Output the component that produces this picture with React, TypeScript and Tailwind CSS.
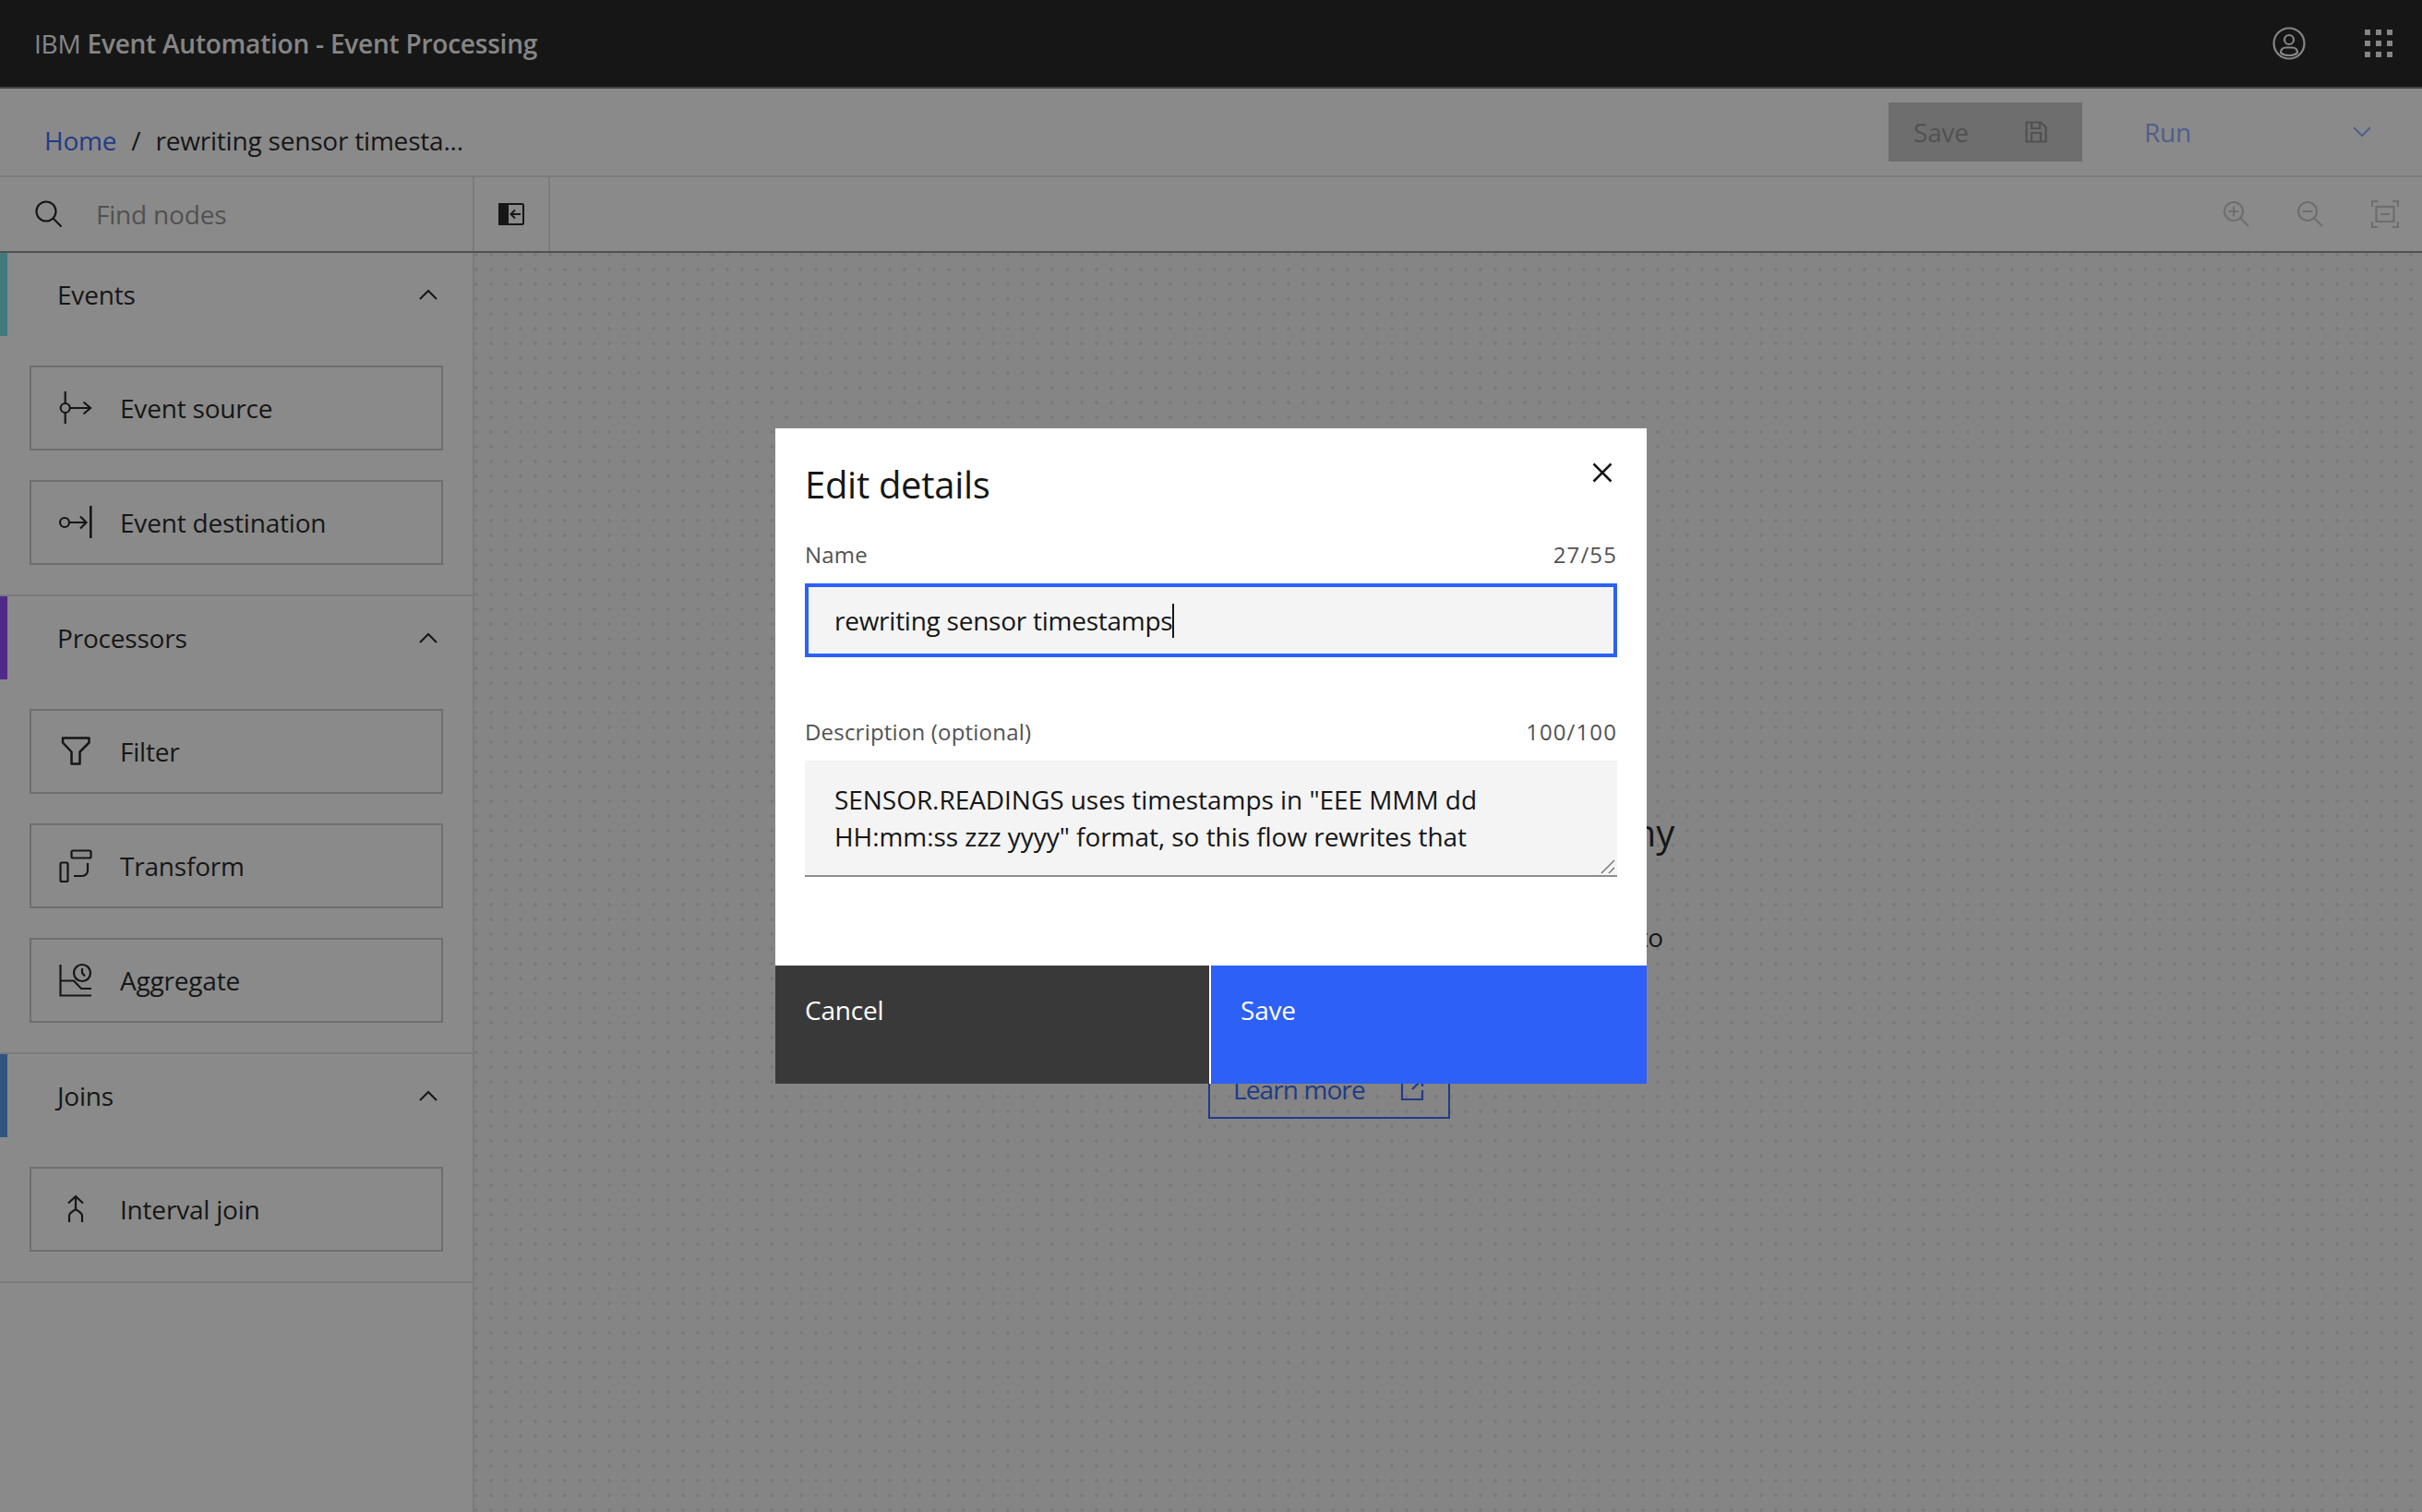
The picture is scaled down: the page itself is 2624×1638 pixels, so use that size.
import type { ReactNode } from "react";

function Svg({ size = 40, children, className = "" }: { size?: number; children: ReactNode; className?: string }) {
  return (
    <svg
      width={size}
      height={size}
      viewBox={`0 0 ${size} ${size}`}
      fill="none"
      stroke="currentColor"
      strokeWidth="2.2"
      className={`shrink-0 ${className}`}
    >
      {children}
    </svg>
  );
}

const nodeIcons: Record<string, ReactNode> = {
  source: (
    <>
      <path d="M8.7 2V15M8.7 25V37" />
      <circle cx="8.7" cy="20" r="5" />
      <path d="M13.7 20H36M28.5 13.5L36 20L28.5 26.5" />
    </>
  ),
  destination: (
    <>
      <circle cx="8" cy="20" r="5" />
      <path d="M13 20H31.5M25 13.5L31.5 20L25 26.5" />
      <path d="M36.3 2V37" strokeWidth="2.6" />
    </>
  ),
  filter: <path d="M6 5.5H34.5V10.5L24.5 20.5V33.5H15.5V20.5L6 10.5Z" strokeLinejoin="round" strokeWidth="2.5" />,
  transform: (
    <>
      <rect x="15.5" y="3.5" width="21" height="8" rx="1.5" />
      <rect x="3.5" y="16.5" width="8" height="20.5" rx="1.5" />
      <path d="M33 17V25A6 6 0 0 1 27 31H18" />
    </>
  ),
  aggregate: (
    <>
      <path d="M3.5 3V36.5H37" />
      <path d="M4 20.5H18L26 29H37" />
      <circle cx="27" cy="12" r="9" />
      <path d="M27 7V12L30 15.5" />
    </>
  ),
  join: <path d="M12 13.5L20 6L28 13.5M20 6V20M13 34V27C13 24 17 22.5 20 20C23 22.5 27 24 27 27V34" />,
};

function NodeCard({ icon, label }: { icon: string; label: string }) {
  return (
    <div className="flex h-[92px] items-center gap-[28px] border-2 border-[#c6c6c6] pl-[28px] text-[#161616]">
      <Svg>{nodeIcons[icon]}</Svg>
      <span>{label}</span>
    </div>
  );
}

function Section({ title, accent, children }: { title: string; accent: string; children: ReactNode }) {
  return (
    <div className="border-b-2 border-[#e0e0e0]">
      <div className={`flex h-[90px] items-center justify-between border-l-8 ${accent} pl-[54px] pr-[38px] text-[#161616]`}>
        <span>{title}</span>
        <svg width="20" height="12" viewBox="0 0 20 12" fill="none" stroke="currentColor" strokeWidth="2">
          <path d="M1 11L10 2L19 11" />
        </svg>
      </div>
      <div className="flex flex-col gap-8 px-8 py-8">{children}</div>
    </div>
  );
}

function Sidebar() {
  return (
    <aside className="w-[514px] shrink-0 border-r-2 border-[#e0e0e0] bg-white">
      <Section title="Events" accent="border-[#6fdfe0]">
        <NodeCard icon="source" label="Event source" />
        <NodeCard icon="destination" label="Event destination" />
      </Section>
      <Section title="Processors" accent="border-[#8a3ffc]">
        <NodeCard icon="filter" label="Filter" />
        <NodeCard icon="transform" label="Transform" />
        <NodeCard icon="aggregate" label="Aggregate" />
      </Section>
      <Section title="Joins" accent="border-[#4a94ec]">
        <NodeCard icon="join" label="Interval join" />
      </Section>
    </aside>
  );
}

function EditDialog() {
  return (
    <div className="flex h-[710px] w-[944px] flex-col bg-white text-[#161616]">
      <div className="flex flex-1 flex-col px-8 pt-[35px]">
        <div className="flex items-start justify-between">
          <h2 className="text-[40px] leading-[52px] tracking-[-0.3px]">Edit details</h2>
          <svg width="22" height="22" viewBox="0 0 22 22" fill="none" stroke="currentColor" strokeWidth="2.6" className="mr-[5px] mt-[2px]">
            <path d="M1.5 1.5L20.5 20.5M20.5 1.5L1.5 20.5" />
          </svg>
        </div>
        <div className="mt-[34px] flex h-8 items-center justify-between text-[24px] tracking-[0.2px] text-[#525252]">
          <label>Name</label>
          <span className="tracking-[1.1px]">27/55</span>
        </div>
        <div className="mt-[15px] flex h-20 items-center border-4 border-[#2c60f6] bg-[#f4f4f4] pl-[28px]">
          <span className="tracking-[-0.25px]">rewriting sensor timestamps</span>
          <span className="h-[37px] w-[2px] bg-[#161616]" />
        </div>
        <div className="mt-[65px] flex h-8 items-center justify-between text-[24px] tracking-[0.2px] text-[#525252]">
          <label>Description (optional)</label>
          <span className="tracking-[1.1px]">100/100</span>
        </div>
        <div className="relative mt-[15px] flex">
          <textarea
            readOnly
            className="h-[126px] w-full resize-none border-b-2 border-[#8d8d8d] bg-[#f4f4f4] px-[32px] pt-[22px] leading-[40px] tracking-[-0.05px] outline-none"
            value={'SENSOR.READINGS uses timestamps in "EEE MMM dd\nHH:mm:ss zzz yyyy" format, so this flow rewrites that'}
          />
          <svg width="16" height="16" viewBox="0 0 16 16" fill="none" stroke="#6f6f6f" strokeWidth="1.4" className="absolute bottom-[3px] right-[2px]">
            <path d="M1 15L15 1M9 15L15 9" />
          </svg>
        </div>
      </div>
      <div className="flex h-32 gap-[2px] text-white">
        <button className="w-[470px] bg-[#393939] pb-[32px] pl-8 text-left">Cancel</button>
        <button className="flex-1 bg-[#2c60f6] pb-[32px] pl-8 text-left">Save</button>
      </div>
    </div>
  );
}

export default function App() {
  return (
    <div className="relative flex h-screen flex-col overflow-hidden bg-white font-['Open_Sans',sans-serif] text-[28px] tracking-[-0.2px]">
      <header className="flex h-[96px] shrink-0 items-center justify-between border-b-2 border-[#6f6f6f] bg-[#161616] pl-[37px] pr-[32px] text-[#f4f4f4]">
        <div className="tracking-[-0.22px]">
          IBM <span className="font-semibold">Event Automation - Event Processing</span>
        </div>
        <div className="flex items-center gap-[64px]">
          <svg width="36" height="36" viewBox="0 0 36 36" fill="none" stroke="currentColor" strokeWidth="2.2">
            <circle cx="18" cy="18" r="16.5" />
            <circle cx="18" cy="14" r="5" />
            <path d="M9 28C9 24 12 22.5 15 22.5H21C24 22.5 27 24 27 28C24 32 12 32 9 28Z" />
          </svg>
          <div className="grid grid-cols-3 gap-[6px]">
            {Array.from({ length: 9 }).map((_, i) => (
              <span key={i} className="h-[6px] w-[6px] bg-[#f4f4f4]" />
            ))}
          </div>
        </div>
      </header>

      <div className="flex h-[96px] shrink-0 items-center justify-between border-b-2 border-[#e0e0e0] pl-[48px] pr-0">
        <div className="mt-[18px] flex items-center text-[#161616]">
          <span className="text-[#2c60f6]">Home</span>
          <span className="mx-[16px]">/</span>
          <span>rewriting sensor timesta...</span>
        </div>
        <div className="flex">
          <button className="flex h-16 w-[210px] items-center justify-between bg-[#c6c6c6] pl-[27px] pr-[38px] text-[#8d8d8d]">
            Save
            <svg width="24" height="24" viewBox="0 0 24 24" fill="none" stroke="currentColor" strokeWidth="2.2">
              <path d="M1.5 1.5H17L22.5 7V22.5H1.5Z" />
              <path d="M7 1.5V8H16V1.5M7 22.5V13H17V22.5" />
            </svg>
          </button>
          <button className="flex h-16 w-[368px] items-center justify-between pl-[67px] pr-[55px] text-[#88a8ff]">
            Run
            <svg width="20" height="12" viewBox="0 0 20 12" fill="none" stroke="currentColor" strokeWidth="2">
              <path d="M1 1L10 10L19 1" />
            </svg>
          </button>
        </div>
      </div>

      <div className="flex h-[82px] shrink-0 border-b-2 border-[#8d8d8d]">
        <div className="flex w-[514px] items-center gap-[36px] border-r-2 border-[#e0e0e0] pl-[38px]">
          <svg width="30" height="30" viewBox="0 0 30 30" fill="none" stroke="#161616" strokeWidth="2.2" className="shrink-0">
            <circle cx="12" cy="12" r="10.5" />
            <path d="M20 20L28.5 28.5" />
          </svg>
          <input placeholder="Find nodes" className="w-full bg-transparent outline-none placeholder:text-[#8d8d8d]" />
        </div>
        <div className="flex w-[82px] items-center justify-center border-r-2 border-[#e0e0e0]">
          <svg width="28" height="24" viewBox="0 0 28 24" fill="none" stroke="#161616" strokeWidth="2">
            <rect x="1" y="1" width="26" height="22" rx="1.5" />
            <rect x="1" y="1" width="9" height="22" fill="#161616" />
            <path d="M24 12H14M18 7.5L13.5 12L18 16.5" />
          </svg>
        </div>
        <div className="flex flex-1 items-center justify-end gap-[52px] pr-[25px] text-[#c6c6c6]">
          <svg width="28" height="28" viewBox="0 0 28 28" fill="none" stroke="currentColor" strokeWidth="2.2">
            <circle cx="11" cy="11" r="10" />
            <path d="M18 18L27 27M11 5.5V16.5M5.5 11H16.5" />
          </svg>
          <svg width="28" height="28" viewBox="0 0 28 28" fill="none" stroke="currentColor" strokeWidth="2.2">
            <circle cx="11" cy="11" r="10" />
            <path d="M18 18L27 27M5.5 11H16.5" />
          </svg>
          <svg width="30" height="30" viewBox="0 0 30 30" fill="none" stroke="currentColor" strokeWidth="2.2">
            <path d="M1 7V1H7M23 1H29V7M29 23V29H23M7 29H1V23" />
            <rect x="5.5" y="7" width="19" height="16" />
            <path d="M10 15H20" />
          </svg>
        </div>
      </div>

      <div className="flex min-h-0 flex-1">
        <Sidebar />
        <main className="flex-1 bg-[#f4f4f4] bg-[radial-gradient(circle_at_2px_2px,#dedede_2px,transparent_2px)] bg-[length:16px_16px] pl-[795px] pt-[600px] text-[#161616]">
          <div className="w-[505px] text-right">
            <h1 className="text-[40px] leading-[56px]">You have not added any</h1>
            <p className="mt-[64px] pr-[12px]">Drag nodes onto the canvas to</p>
          </div>
          <a className="mt-[112px] flex h-16 w-[262px] items-center justify-between border-2 border-[#2c60f6] pl-[25px] pr-[26px] tracking-[-0.9px] text-[#2c60f6]">
            Learn more
            <svg width="26" height="26" viewBox="0 0 26 26" fill="none" stroke="currentColor" strokeWidth="2.2">
              <path d="M11 3H2V24H24V14M16 2H24V10M24 2L13 13" />
            </svg>
          </a>
        </main>
      </div>

      <div className="absolute inset-0 flex items-center justify-center bg-[#16161680]">
        <EditDialog />
      </div>
    </div>
  );
}
